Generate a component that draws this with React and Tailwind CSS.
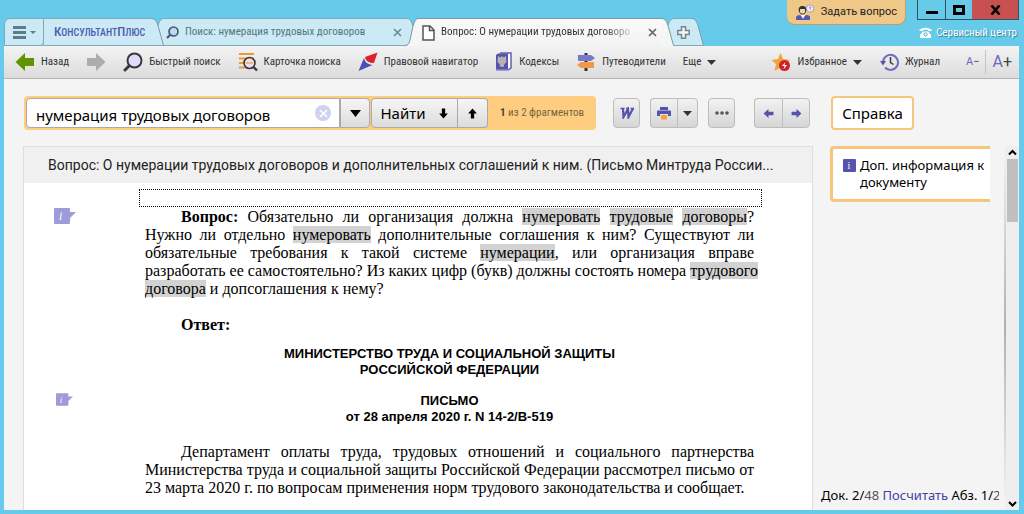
import { useState } from "react";

const TOOLBAR_LEFT = [
  { icon: SearchIcon, label: "Быстрый поиск" },
  { icon: CardSearchIcon, label: "Карточка поиска" },
  { icon: CompassIcon, label: "Правовой навигатор" },
  { icon: CodexIcon, label: "Кодексы" },
  { icon: SignpostIcon, label: "Путеводители" },
];

/* ---------- icons ---------- */

function SearchIcon() {
  return (
    <svg width="20" height="20" viewBox="0 0 20 20" className="shrink-0">
      <circle cx="11.5" cy="8.5" r="7" fill="#dedcfb" stroke="#383838" strokeWidth="2" />
      <path d="M6 14L2 18" stroke="#383838" strokeWidth="3" strokeLinecap="round" />
    </svg>
  );
}

function CardSearchIcon() {
  return (
    <svg width="20" height="20" viewBox="0 0 20 20" className="shrink-0">
      <path d="M1 2h15M1 6.500h15M1 11h15M1 15.500h8" stroke="#eb9a36" strokeWidth="2" />
      <circle cx="11.500" cy="11" r="5.500" fill="#ecdcf0" fillOpacity="0.85" stroke="#383838" strokeWidth="1.600" />
      <path d="M8 11h7" stroke="#f0b880" strokeWidth="2" />
      <path d="M15.500 15L19 18.500" stroke="#383838" strokeWidth="2.400" />
    </svg>
  );
}

function CompassIcon() {
  return (
    <svg width="20" height="20" viewBox="0 0 20 20" className="shrink-0">
      <path d="M19.500 0.500L7 5q1 6 9 6z" fill="#d8232a" />
      <path d="M6 6q1 6 8.500 7L0.500 19z" fill="#4f4db5" />
    </svg>
  );
}

function CodexIcon() {
  return (
    <svg width="18" height="20" viewBox="0 0 18 20" className="shrink-0">
      <path d="M5 1h11v15l-3 2" fill="#fff" stroke="#5f5db8" strokeWidth="1.500" />
      <path d="M1 3l2-1.500h10V18H2l-1-1z" fill="#5553ae" />
      <path d="M3 4l2.500 1.500L7 4l1.500 1.500L11 4l.5 6-2 2-1 3h-3l-1-3-2-2z" fill="#b9b0b6" />
      <path d="M1 18h12" stroke="#8a88cc" strokeWidth="1.500" />
    </svg>
  );
}

function SignpostIcon() {
  return (
    <svg width="20" height="18" viewBox="0 0 20 18" className="shrink-0">
      <path d="M10 0v18" stroke="#333" strokeWidth="3" />
      <path d="M2 2h13l4 3-4 3H2z" fill="#7a78c6" />
      <path d="M18 9H5l-4 3 4 3h13z" fill="#f09a48" />
    </svg>
  );
}

function BackIcon() {
  return (
    <svg width="20" height="20" viewBox="0 0 20 20">
      <path d="M10 1v5h9v8h-9v5L0.500 10z" fill="#5f9400" />
    </svg>
  );
}

function ForwardIcon() {
  return (
    <svg width="20" height="20" viewBox="0 0 20 20">
      <path d="M10 1v5H1v8h9v5l9.500-9z" fill="#adadad" />
    </svg>
  );
}

function StarIcon() {
  return (
    <svg width="20" height="20" viewBox="0 0 20 20" className="shrink-0">
      <path d="M9.500 1l2.500 6 7 1-5 4.500 1 6-5.500-3-6 3.500 1.500-7L0.500 8l6.500-1z" fill="#f0a33c" />
      <circle cx="13.500" cy="13.500" r="5.500" fill="#cf2026" />
      <path d="M14.500 10l-3.500 4h2.500l-1 3.500 3.500-4.500h-2.500z" fill="#fff" />
    </svg>
  );
}

function HistoryIcon() {
  return (
    <svg width="19" height="18" viewBox="0 0 19 18" className="shrink-0">
      <path d="M3 9a7.500 7.500 0 1 1 2 5.500" fill="none" stroke="#6e6cc0" strokeWidth="2" />
      <path d="M0 8l6 0-3 4.500z" fill="#5553ae" />
      <path d="M10.500 4v5.500l3 2" fill="none" stroke="#3a3a3a" strokeWidth="1.500" />
    </svg>
  );
}

function AdvisorIcon() {
  return (
    <svg width="20" height="17" viewBox="0 0 20 17" className="shrink-0">
      <circle cx="15" cy="4.500" r="3.700" fill="#f3f0fa" stroke="#a79ac0" />
      <path d="M14 3.500q1-1.500 2 0l-1 1.300v1" fill="none" stroke="#8a82bc" />
      <path d="M4.500 8V5.500a3 3 0 0 1 6 0V8l-1.500 2H6z" fill="#f3d5ac" stroke="#4a4038" />
      <path d="M3.500 7q0-5 4-5t4 5l-2-2h-4z" fill="#333" />
      <path d="M1 16v-3q1-2 4-2l3 2.500 3-2.500q4 0 4 2v3z" fill="#5956b5" />
      <path d="M6 11l2 4 2-4z" fill="#fff" />
    </svg>
  );
}

function PhoneIcon() {
  return (
    <svg width="13" height="12" viewBox="0 0 13 12" className="shrink-0">
      <path d="M0.500 4V2.500Q6.500-1 12.500 2.500V4H9V2.700H4V4z" fill="#fff" />
      <path d="M4 4.500h5l3 3.500v3H1V8z" fill="#fff" />
      <circle cx="6.500" cy="7.500" r="1.600" fill="#fff" stroke="#45a4c6" />
    </svg>
  );
}

function WordIcon() {
  return (
    <svg width="14" height="12" viewBox="0 0 14 12">
      <path d="M0.500 1.500h4M6 1.500h3M10.500 1.500h3.500" stroke="#5553ae" strokeWidth="1.600" />
      <path d="M3 1.500l0.500 8.500L8 2l0.500 8L13 1.500" fill="none" stroke="#5553ae" strokeWidth="2.200" />
    </svg>
  );
}

function PrinterIcon() {
  return (
    <svg width="14" height="13" viewBox="0 0 14 13">
      <path d="M3 0h8v3H3z" fill="#5553ae" />
      <path d="M1 3.500h12q1 0 1 1V9h-3V7H3v2H0V4.500q0-1 1-1z" fill="#5553ae" />
      <path d="M4 8h6v4.500H4z" fill="#f2a53c" />
    </svg>
  );
}

function PageIcon() {
  return (
    <svg width="13" height="16" viewBox="0 0 13 16" className="shrink-0">
      <path d="M1 1h7l4 4v10H1z" fill="#fff" stroke="#555" strokeWidth="1.500" />
      <path d="M7.500 1v4.500H12" fill="none" stroke="#555" strokeWidth="1.500" />
    </svg>
  );
}

function SmallArrow({ dir, color = "#000" }) {
  const turn = { up: 0, right: 90, down: 180, left: 270 }[dir];
  return (
    <svg width="11" height="11" viewBox="0 0 10 10">
      <path d="M5 0.500L9 5H6.500v4.500h-3V5H1z" fill={color} transform={`rotate(${turn} 5 5)`} />
    </svg>
  );
}

function Caret({ color = "#333", big = false }) {
  return (
    <svg width={big ? 11 : 9} height={big ? 7 : 5} viewBox="0 0 9 5" preserveAspectRatio="none" className="shrink-0">
      <path d="M0 0h9L4.500 5z" fill={color} />
    </svg>
  );
}

function CloseIcon({ color }) {
  return (
    <svg width="9" height="9" viewBox="0 0 9 9">
      <path d="M1 1l7 7M8 1L1 8" stroke={color} strokeWidth="1.700" />
    </svg>
  );
}

function NoteMarker({ small = false }) {
  return (
    <svg width={small ? 17 : 22} height={small ? 13 : 16} viewBox="0 0 22 16">
      <path d="M1 0h14q1 0 1 1v3h6l-6 6v5q0 1-1 1H1q-1 0-1-1V1q0-1 1-1z" fill="#9d9bd9" />
      <text x="5" y="12" fill="#fff" fontSize="12" fontStyle="italic" fontFamily="Liberation Serif, serif">i</text>
    </svg>
  );
}

/* ---------- tab edges ---------- */

function Seam({ left, right, leftFront = true, leftOpen = false }) {
  if (!leftFront) {
    return (
      <svg width="14" height="28" viewBox="0 0 14 28" className="shrink-0">
        <path d="M0 0.500h3q4 0 6 8v19H0z" fill={left} />
        <path d="M0 0.500h3q4 0 6 8M0 27.500h3" fill="none" stroke="#7fa9b8" />
        <path d="M2 28q3-1 4-6l3-14q2-7 5-7.500V28z" fill={right} />
        <path d="M1 27.500q4 0 5-5.500l3-14q2-7.500 5-7.500" fill="none" stroke="#7c98a4" />
      </svg>
    );
  }
  return (
    <svg width="12" height="28" viewBox="0 0 12 28" className="shrink-0">
      {right && <path d="M12 0.500q-4 0-6 7V28h6z" fill={right} />}
      {right && <path d="M12 0.500q-4 0-6 7M10 27.500h2" fill="none" stroke="#7fa9b8" />}
      <path d="M0 0.500q4 0 6 7l5.500 20V28H0z" fill={left} />
      <path d="M0 0.500q4 0 6 7l5.500 20" fill="none" stroke="#7c98a4" />
      {!leftOpen && <path d="M0 27.500h12" stroke="#7fa9b8" />}
    </svg>
  );
}

function Mark({ children }) {
  return <mark className="bg-[#d2d2d2] text-black">{children}</mark>;
}

function DocRow({ marker, children }) {
  return (
    <div className="flex">
      <div className="flex w-[121px] shrink-0 justify-center pr-10">{marker}</div>
      <div className="min-w-0 flex-1">{children}</div>
    </div>
  );
}

const btn = "flex items-center justify-center border border-[#bdbdbd] bg-gradient-to-b from-[#f2f2f2] to-[#d6d6d6]";
const searchBtn = "flex items-center justify-center border border-[#a9a9b0] bg-gradient-to-b from-[#f6f6f6] to-[#dcdcdc]";
const pale = "border-y border-[#7fa9b8] bg-[#cbeaf5]";
const uiFont = "font-['Noto_Sans','Open_Sans',sans-serif]";

export default function App() {
  const [query, setQuery] = useState("нумерация трудовых договоров");

  return (
    <div className="flex h-screen flex-col overflow-hidden bg-[#66cbea] pb-1 pl-1 pr-[5px] font-['Roboto_Condensed','Roboto',sans-serif] text-[11px] text-[#333]">
      {/* Title bar */}
      <header className="flex h-[46px] shrink-0 items-end justify-between">
        <nav className="flex h-7 items-stretch">
          <button aria-label="Меню" className="flex w-10 items-center justify-center gap-1 rounded-br rounded-tl-md border border-[#7fa9b8] bg-[#cbeaf5]">
            <svg width="13" height="13" viewBox="0 0 13 13">
              <path d="M0 1.500h13M0 6.500h13M0 11.500h13" stroke="#5c7d8a" strokeWidth="3" />
            </svg>
            <svg width="6" height="3" viewBox="0 0 6 3">
              <path d="M0 0h6L3 3z" fill="#5c7d8a" />
            </svg>
          </button>
          <a href="#" className={`flex w-[108px] items-center pl-[10px] font-medium text-[#4f5bb0] ${pale}`}>
            <span className="whitespace-nowrap text-[10px]">
              <span className="text-[13px]">К</span>ОНСУЛЬТАНТ<span className="text-[13px]">П</span>ЛЮС
            </span>
          </a>
          <Seam left="#cbeaf5" right="#cbeaf5" />
          <div className={`flex w-60 items-center gap-1.5 pl-[2px] text-[#557580] ${pale}`}>
            <svg width="13" height="13" viewBox="0 0 13 13" className="shrink-0">
              <circle cx="7.500" cy="5.500" r="4.500" fill="#c4d4f6" stroke="#3f5d6c" strokeWidth="1.700" />
              <path d="M4 9L1 12" stroke="#3f5d6c" strokeWidth="2.200" />
            </svg>
            <a href="#" className="flex-1 whitespace-nowrap">Поиск: нумерация трудовых договоров</a>
            <button aria-label="Закрыть вкладку" className="pr-[2px]"><CloseIcon color="#6d8d99" /></button>
          </div>
          <Seam left="#cbeaf5" right="#f6f6f6" leftFront={false} />
          <div className="flex w-[244px] items-center gap-1.5 border-t border-[#7c98a4] bg-gradient-to-b from-[#fafafa] to-[#f3f3f3] pl-1">
            <PageIcon />
            <a href="#" className="min-w-0 flex-1 whitespace-nowrap [mask-image:linear-gradient(to_right,black_82%,transparent)]">
              Вопрос: О нумерации трудовых договоро
            </a>
            <button aria-label="Закрыть вкладку" className="pl-1 pr-[5px]"><CloseIcon color="#666" /></button>
          </div>
          <Seam left="#f6f6f6" right="#cbeaf5" leftOpen />
          <button aria-label="Новая вкладка" className={`flex w-[18px] items-center justify-center ${pale}`}>
            <svg width="13" height="13" viewBox="0 0 13 13">
              <path d="M4.500 0.800h4v3.700h3.700v4H8.500v3.700h-4V8.500H0.800v-4h3.700z" fill="#f4f4f4" stroke="#75858c" strokeWidth="1.500" />
            </svg>
          </button>
          <Seam left="#cbeaf5" />
        </nav>

        <div className="flex items-start gap-[11px] self-start">
          <button className="flex h-[25px] items-center gap-1.5 rounded-b-lg border-b border-r border-[#b9a06e] bg-[#efc787] px-2 font-['Roboto',sans-serif] text-[#222]">
            <AdvisorIcon />
            Задать вопрос
          </button>
          <div className="flex flex-col items-end gap-[5px]">
            <div className="flex h-5 border-x border-b border-[#35515c]">
              <button aria-label="Свернуть" className="flex w-7 items-end justify-center border-r border-[#35515c] pb-[5px]">
                <svg width="12" height="3"><path d="M0 1.500h12" stroke="#000" strokeWidth="3" /></svg>
              </button>
              <button aria-label="Развернуть" className="flex w-[26px] items-center justify-center">
                <svg width="12" height="10"><path d="M1.500 1.500h9v7h-9z" fill="none" stroke="#000" strokeWidth="3" /></svg>
              </button>
              <button aria-label="Закрыть" className="flex w-[46px] items-center justify-center bg-[#c75050]">
                <svg width="11" height="10"><path d="M1.500 0.500l8 9M9.500 0.500l-8 9" stroke="#000" strokeWidth="2.600" /></svg>
              </button>
            </div>
            <a href="#" className="flex items-center gap-1 whitespace-nowrap pr-[2px] leading-4 text-white [text-shadow:1px_1px_1px_#2b7894]">
              <PhoneIcon />
              Сервисный центр
            </a>
          </div>
        </div>
      </header>

      {/* Toolbar */}
      <div className="flex h-[33px] shrink-0 items-center justify-between border-b border-[#b4b4b4] bg-gradient-to-b from-[#f3f3f3] to-[#dcdcdc] pl-[11px] pr-[7px]">
        <div className="flex items-center gap-[17px] whitespace-nowrap">
          <button className="flex items-center gap-1.5"><BackIcon />Назад</button>
          <button aria-label="Вперед"><ForwardIcon /></button>
          {TOOLBAR_LEFT.map(({ icon: Icon, label }) => (
            <button key={label} className="flex items-center gap-1.5"><Icon />{label}</button>
          ))}
          <button className="flex items-center gap-1.5">Еще <Caret /></button>
        </div>
        <div className="flex items-center gap-[18px] whitespace-nowrap">
          <button className="flex items-center gap-1.5">
            <StarIcon />Избранное <Caret />
          </button>
          <button className="flex items-center gap-1.5"><HistoryIcon />Журнал</button>
          <div className="flex items-center pl-2">
            <button className="pr-1.5 font-['Roboto',sans-serif] text-[#6a68bc]">A<span className="text-[#444]">−</span></button>
            <button className="border-l border-[#c4c4c4] pl-1.5 font-['Roboto',sans-serif] text-base text-[#6a68bc]">A<span className="text-[#444]">+</span></button>
          </div>
        </div>
      </div>

      <div className="flex min-h-0 flex-1 flex-col bg-[#f4f4f4]">
        {/* Search row */}
        <div className={`flex shrink-0 items-center pb-4 pl-5 pt-[17px] ${uiFont}`}>
          <div className="flex h-[34px] items-center rounded-sm bg-[#ffcd80] p-[2px] pr-3">
            <div className="flex h-[30px] w-[314px] items-center rounded-l-sm border border-[#a9a9b0] bg-white">
              <input
                aria-label="Поиск в тексте"
                value={query}
                onChange={(e) => setQuery(e.target.value)}
                className="min-w-0 flex-1 bg-transparent pl-[9px] pt-1 text-[15px] text-black outline-none"
              />
              <button aria-label="Очистить" onClick={() => setQuery("")} className="mr-2 flex size-4 items-center justify-center rounded-full bg-[#ccd2ef]">
                <CloseIcon color="#fff" />
              </button>
            </div>
            <button aria-label="История запросов" className={`h-[30px] w-[30px] rounded-r-sm ${searchBtn}`}><Caret color="#000" big /></button>
            <button className={`ml-px h-[30px] w-[87px] gap-3 rounded-l-sm text-[15px] text-black ${searchBtn}`}>
              Найти <SmallArrow dir="down" />
            </button>
            <button aria-label="Предыдущий фрагмент" className={`h-[30px] w-[30px] rounded-r-sm border-l-0 ${searchBtn}`}><SmallArrow dir="up" /></button>
            <span className="whitespace-nowrap pl-3 font-['Roboto_Condensed','Roboto',sans-serif] text-[11px] text-[#776444]"><b className="text-[#444]">1</b> из 2 фрагментов</span>
          </div>

          <div className="ml-[17px] flex gap-[10px]">
            <button aria-label="Экспорт в Word" className={`h-[30px] w-[27px] rounded ${btn}`}><WordIcon /></button>
            <div className="flex">
              <button aria-label="Печать" className={`h-[30px] w-[27px] rounded-l border-r-0 ${btn}`}><PrinterIcon /></button>
              <button aria-label="Параметры печати" className={`h-[30px] w-[21px] rounded-r ${btn}`}><Caret /></button>
            </div>
            <button aria-label="Дополнительно" className={`h-[30px] w-[27px] rounded ${btn}`}>
              <svg width="14" height="4"><circle cx="2" cy="2" r="1.800" fill="#555" /><circle cx="7" cy="2" r="1.800" fill="#555" /><circle cx="12" cy="2" r="1.800" fill="#555" /></svg>
            </button>
          </div>
          <div className="ml-[19px] flex">
            <button aria-label="Предыдущий документ" className={`h-[30px] w-7 rounded-l border-r-0 ${btn}`}><SmallArrow dir="left" color="#5553ae" /></button>
            <button aria-label="Следующий документ" className={`h-[30px] w-7 rounded-r ${btn}`}><SmallArrow dir="right" color="#5553ae" /></button>
          </div>
          <button className="ml-[21px] h-[34px] rounded-sm border-2 border-[#f7c57b] bg-white px-[9px] text-[15px] text-black">
            Справка
          </button>
        </div>

        <div className="flex min-h-0 flex-1">
          {/* Document */}
          <main className="ml-[19px] flex min-w-0 flex-1 flex-col overflow-hidden border-x border-t border-[#dedede] bg-white">
            <h1 className="shrink-0 truncate bg-[#f0f0f0] px-6 font-['Roboto',sans-serif] text-sm leading-9 text-[#222]">
              Вопрос: О нумерации трудовых договоров и дополнительных соглашений к ним. (Письмо Минтруда России...
            </h1>
            <div className="ml-[115px] mr-[50px] mt-[6px] h-[18px] shrink-0 border border-dotted border-black" />
            <article className="pr-[58px] pt-px font-['Liberation_Serif',serif] text-base leading-[18px] text-black">
              <DocRow marker={<NoteMarker />}>
                <p className="text-justify indent-9">
                  <b>Вопрос:</b> Обязательно ли организация должна <Mark>нумеровать</Mark> <Mark>трудовые</Mark> <Mark>договоры</Mark>?
                  Нужно ли отдельно <Mark>нумеровать</Mark> дополнительные соглашения к ним? Существуют ли
                  обязательные требования к такой системе <Mark>нумерации</Mark>, или организация вправе{" "}
                  <span className="whitespace-nowrap">
                    разработать ее самостоятельно? Из каких цифр (букв) должны состоять номера <Mark>трудового</Mark>
                  </span>{" "}
                  <Mark>договора</Mark> и допсоглашения к нему?
                </p>
                <p className="pt-[18px] indent-9"><b>Ответ:</b></p>
              </DocRow>
              <DocRow>
                <h2 className="pt-3 text-center font-['Liberation_Sans',sans-serif] text-[13px] leading-4 font-bold">
                  МИНИСТЕРСТВО ТРУДА И СОЦИАЛЬНОЙ ЗАЩИТЫ<br />РОССИЙСКОЙ ФЕДЕРАЦИИ
                </h2>
              </DocRow>
              <div className="pt-[15px]">
                <DocRow marker={<NoteMarker small />}>
                  <h3 className="text-center font-['Liberation_Sans',sans-serif] text-[13px] leading-4 font-bold">
                    ПИСЬМО<br />от 28 апреля 2020 г. N 14-2/В-519
                  </h3>
                </DocRow>
              </div>
              <DocRow>
                <p className="pt-[18px] text-justify indent-9">
                  Департамент оплаты труда, трудовых отношений и социального партнерства
                  Министерства труда и социальной защиты Российской Федерации рассмотрел письмо от
                  23 марта 2020 г. по вопросам применения норм трудового законодательства и сообщает.
                </p>
              </DocRow>
            </article>
          </main>

          {/* Side panel */}
          <aside className={`flex w-[191px] shrink-0 flex-col justify-between pl-[17px] ${uiFont}`}>
            <a href="#" className="flex w-40 gap-1 rounded-l border-y-[3px] border-l-[3px] border-[#f7c57b] bg-white py-2 pl-[10px] text-[13px] leading-[17px] text-black">
              <svg width="13" height="13" viewBox="0 0 13 13" className="mt-[2px] shrink-0">
                <rect width="13" height="13" rx="1" fill="#5553ae" />
                <text x="4.500" y="10" fill="#fff" fontSize="10" fontFamily="Liberation Serif, serif">i</text>
              </svg>
              <span>Доп. информация к документу</span>
            </a>
            <div className="ml-[-9px] w-[178px] overflow-hidden whitespace-nowrap pb-[5px] text-[13px] leading-5 text-black">
              Док. 2/<span className="text-[#555]">48</span> <a href="#" className="text-[#4340a8]">Посчитать</a> Абз. 1/<span className="text-[#555]">2</span>
            </div>
          </aside>

          {/* Scrollbar */}
          <div className="w-[2px] shrink-0 self-stretch bg-gradient-to-b from-transparent via-[#b0b0b0] to-transparent" />
          <div className="flex w-[13px] shrink-0 flex-col items-center justify-between bg-[#eeeeee] pr-px">
            <div className="flex w-full flex-col items-center">
              <svg width="9" height="13" viewBox="0 0 9 13"><path d="M1 8.500l3.500-3.500L8 8.500" fill="none" stroke="#000" strokeWidth="2" /></svg>
              <div className="h-[63px] w-[11px] bg-[#bfbfbf]" />
            </div>
            <svg width="9" height="13" viewBox="0 0 9 13"><path d="M1 5l3.500 3.500L8 5" fill="none" stroke="#000" strokeWidth="2" /></svg>
          </div>
        </div>
      </div>
    </div>
  );
}
